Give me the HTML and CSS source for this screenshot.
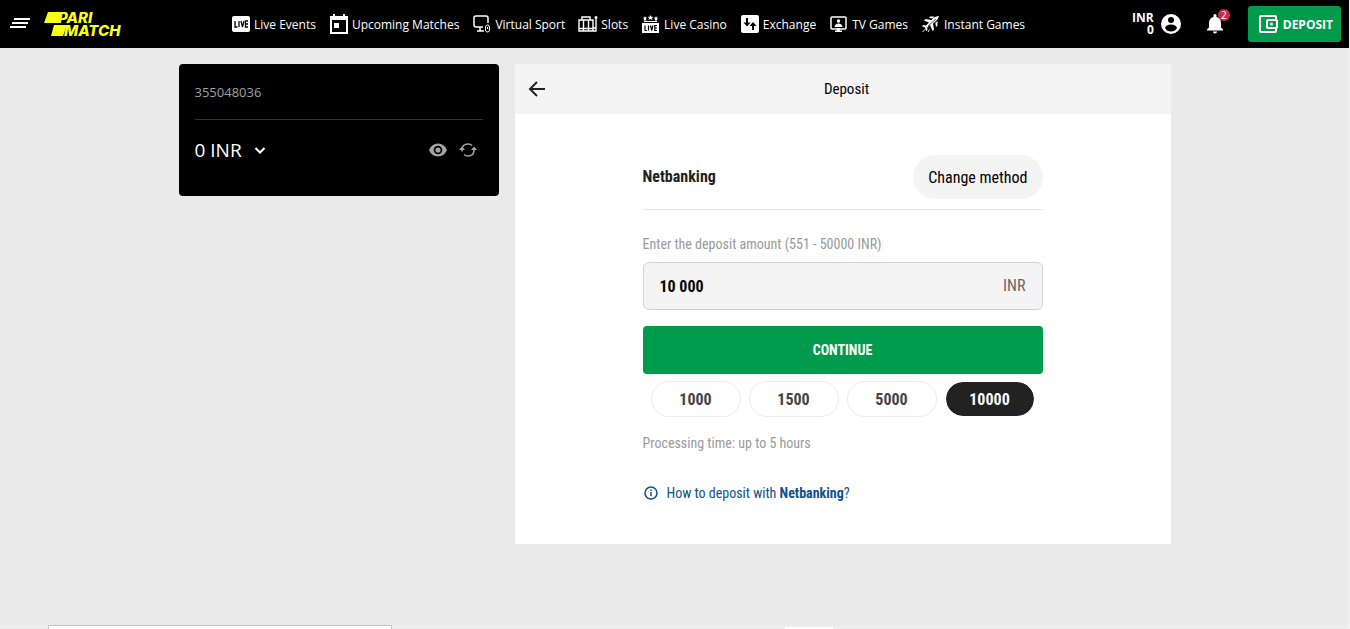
FILE: index.html
```html
<!DOCTYPE html>
<html lang="en">
<head>
    <meta charset="UTF-8">
    <meta name="viewport" content="width=device-width, initial-scale=1.0">
    <title>Deposit</title>
    <link rel="stylesheet" href="styles.css">
</head>
<body>
    <header class="header">
        <div class="brand">
            <button class="icon-button" aria-label="Menu">
                <svg width="20" height="20" viewBox="0 0 20 20" fill="none" stroke="#fff" stroke-width="2">
                    <path d="M4 5h16M2 9h16M0 13h16"/>
                </svg>
            </button>
            <a href="#" class="logo" aria-label="Parimatch">
                <svg width="80" height="26" viewBox="0 0 80 26" fill="#f8ff13">
                    <path d="M4 1h15l-4 11H0zM10 14h13l-4 11H7z"/>
                    <text x="14" y="12">PARI</text>
                    <text x="20" y="25">MATCH</text>
                </svg>
            </a>
        </div>
        <nav class="nav">
            <a href="#">
                <svg width="20" height="20" viewBox="0 0 20 20">
                    <rect x="1" y="2" width="18" height="16" rx="2" fill="#fff"/>
                    <path d="M4 7v6h2.500M8 7v6M10 7l1.500 6L13 7M17 7h-2.500v6H17M14.500 10H17" fill="none" stroke="#000" stroke-width="1.300"/>
                </svg>
                Live Events
            </a>
            <a href="#">
                <svg width="20" height="20" viewBox="0 0 20 20">
                    <path d="M2 3h16v16H2z" fill="none" stroke="#fff" stroke-width="2"/>
                    <path d="M1 2h18v4H1zM4 0h2v3H4zM14 0h2v3h-2zM5 9h5v5H5z" fill="#fff"/>
                </svg>
                Upcoming Matches
            </a>
            <a href="#">
                <svg width="20" height="20" viewBox="0 0 20 20" fill="none" stroke="#fff" stroke-width="1.500">
                    <path d="M16 9V4q0-2-2-2H4Q2 2 2 4v7q0 2 2 2h7M8 13v4M5 17h7"/>
                    <rect x="13.500" y="11" width="4" height="7" rx="2" stroke-width="1"/>
                    <path d="M15.500 13v2" stroke-width="1"/>
                </svg>
                Virtual Sport
            </a>
            <a href="#">
                <svg width="20" height="20" viewBox="0 0 20 20" fill="none" stroke="#fff" stroke-width="1.400">
                    <path d="M1 6h14v11H1zM5.500 6v11M10.500 6v11M4 6V3h8v3M1 14.500h14M15 14h3V5M15 17h3v-4"/>
                    <circle cx="18" cy="3.500" r="1.500" fill="#fff" stroke="none"/>
                </svg>
                Slots
            </a>
            <a href="#">
                <svg width="20" height="20" viewBox="0 0 20 20">
                    <path d="M1 9h17v10H1zM3 7h13v1H3z" fill="#fff"/>
                    <path d="M9.500 1l.8 1.700h2L11 4l.5 2-2-1-2 1 .5-2-1.300-1.300h2zM4 2l.7 1.500H6L5 5l.5 1.500H2.500L3 5 2 3.500h1.300zM15 2l.7 1.500H17L16 5l.5 1.500h-3L14 5l-1-1.500h1.300z" fill="#fff"/>
                    <path d="M4 11.500v5h2M7.500 11.500v5M9.500 11.500l1.200 5 1.200-5M16 11.500h-2.200v5H16M13.800 14H16" fill="none" stroke="#000" stroke-width="1.200"/>
                </svg>
                Live Casino
            </a>
            <a href="#">
                <svg width="20" height="20" viewBox="0 0 20 20">
                    <rect x="1" y="1" width="18" height="18" rx="2" fill="#fff"/>
                    <path d="M7 4v6M13 16v-5" stroke="#000" stroke-width="2"/>
                    <path d="M3.500 8.500h7L7 12.500zM9.500 12l3.500-4 3.500 4z"/>
                </svg>
                Exchange
            </a>
            <a href="#">
                <svg width="20" height="20" viewBox="0 0 20 20" fill="#fff">
                    <rect x="2" y="3" width="15" height="12" rx="1" fill="none" stroke="#fff" stroke-width="1.500"/>
                    <circle cx="9.500" cy="7" r="1.700"/>
                    <path d="M5.500 13q.5-3.500 4-3.500t4 3.500zM8 14h3v3H8zM6 16.500h7V18H6z"/>
                </svg>
                TV Games
            </a>
            <a href="#">
                <svg width="20" height="20" viewBox="0 0 20 20" fill="#fff">
                    <path d="M18 2q-3 0-5 1.500L10.500 6 4.500 5 3 6.500 8 8.500l-3 3-3-.5L1 12.200l3 1.300 1.300 3.500 1.200-1-.3-2.500L9 11l2.500 6L13 15.500l-1-6L15 7q2.500-2 3-5z"/>
                    <path d="M9 2.500h4.500L11.500 4.500 8 3.800zM16.500 7v4.500L15 13l-.7-4z"/>
                    <path d="M1.500 18l3-3M7 18l1.500-2.500" stroke="#fff"/>
                    <path d="M7 12l8-7" stroke="#000" stroke-width=".7"/>
                </svg>
                Instant Games
            </a>
        </nav>
        <div class="account">
            <a href="#" class="profile">
                <span>INR<br>0</span>
                <svg width="22" height="22" viewBox="0 0 22 22">
                    <circle cx="11" cy="11" r="10" fill="#fff"/>
                    <circle cx="11" cy="7" r="3"/>
                    <path d="M5 15q1-3.500 6-3.500t6 3.500q-2 3.500-6 3.500T5 15z"/>
                </svg>
            </a>
            <button class="icon-button bell" aria-label="Notifications">
                <svg width="18" height="20" viewBox="0 0 18 20" fill="#fff">
                    <path d="M7.500 3V1.500a1.500 1.500 0 0 1 3 0V3q4.500 1.200 4.500 6v4.500l2 2v1H1v-1l2-2V9q0-4.800 4.500-6zM7 17.500h4a2 2 0 0 1-4 0z"/>
                </svg>
                <span class="badge">2</span>
            </button>
            <button class="deposit-button">
                <svg width="20" height="20" viewBox="0 0 20 20" fill="none" stroke="#fff" stroke-width="2">
                    <path d="M18 5V3q0-1-1-1H3Q2 2 2 3v14q0 1 1 1h14q1 0 1-1v-2"/>
                    <rect x="9" y="6" width="10" height="8" rx="1"/>
                    <circle cx="13.500" cy="10" r="1.500" fill="#fff" stroke="none"/>
                </svg>
                DEPOSIT
            </button>
        </div>
    </header>

    <main class="content">
        <aside class="balance">
            <p class="user-id">355048036</p>
            <div class="balance-row">
                <button class="icon-button amount">
                    0 INR
                    <svg width="12" height="12" viewBox="0 0 12 12" fill="none" stroke="#fff" stroke-width="2">
                        <path d="M1.500 4L6 8.500 10.500 4"/>
                    </svg>
                </button>
                <div class="balance-actions">
                    <button class="icon-button" aria-label="Hide balance">
                        <svg width="20" height="20" viewBox="0 0 20 20" fill="#a5a5a5">
                            <path fill-rule="evenodd" d="M10 3.500q6.300 0 9 6.500-2.700 6.500-9 6.500T1 10q2.700-6.500 9-6.500zm0 2.200a4.300 4.300 0 1 0 0 8.600 4.300 4.300 0 0 0 0-8.600z"/>
                            <circle cx="10" cy="10" r="2.600"/>
                        </svg>
                    </button>
                    <button class="icon-button" aria-label="Refresh balance">
                        <svg width="20" height="20" viewBox="0 0 20 20" fill="none" stroke="#a5a5a5" stroke-width="1.500">
                            <path d="M4 11.500V10q0-6 6-6 2.500 0 4 1.500M16 9v1q0 6-6 6-2.500 0-4-1.500"/>
                            <path d="M1 10h6l-3-3.500zM13 10h6l-3-3.500z" fill="#a5a5a5" stroke="none"/>
                        </svg>
                    </button>
                </div>
            </div>
        </aside>

        <section class="panel">
            <div class="panel-header">
                <button class="icon-button" aria-label="Back">
                    <svg width="20" height="20" viewBox="0 0 20 20" fill="none" stroke="#222" stroke-width="2">
                        <path d="M18 10H3M10 3l-7 7 7 7"/>
                    </svg>
                </button>
                <h1>Deposit</h1>
            </div>
            <form class="deposit-form">
                <div class="method">
                    <h2>Netbanking</h2>
                    <button type="button" class="change-method">Change method</button>
                </div>
                <label for="amount">Enter the deposit amount (551 - 50000 INR)</label>
                <div class="amount-field">
                    <input type="text" id="amount" value="10 000">
                    <span>INR</span>
                </div>
                <button type="submit" class="continue">CONTINUE</button>
                <div class="presets">
                    <button type="button">1000</button>
                    <button type="button">1500</button>
                    <button type="button">5000</button>
                    <button type="button" class="active">10000</button>
                </div>
                <p class="processing">Processing time: up to 5 hours</p>
                <a href="#" class="help">
                    <svg width="16" height="16" viewBox="0 0 16 16" fill="none" stroke="#0f5288" stroke-width="1.500">
                        <circle cx="8" cy="8" r="6"/>
                        <path d="M8 7v4M8 4.500V6"/>
                    </svg>
                    <span>How to deposit with <b>Netbanking</b>?</span>
                </a>
            </form>
        </section>
    </main>

    <footer class="bottom-bar">
        <div class="bottom-box"></div>
        <div class="bottom-tab"></div>
    </footer>
</body>
</html>
```

FILE: styles.css
```css
* {
    box-sizing: border-box;
}
body {
    display: flex;
    flex-direction: column;
    min-height: 100vh;
    margin: 0;
    border-right: 1px solid #f4f4f4;
    background: #eaeaea;
    font-family: "Open Sans", sans-serif;
}
h1, h2, p {
    margin: 0;
}
a {
    color: inherit;
    text-decoration: none;
}
button, input {
    font-family: inherit;
}
button {
    cursor: pointer;
}
svg {
    display: block;
    flex: none;
    overflow: visible;
}
.icon-button {
    padding: 0;
    border: none;
    background: none;
}

/* Header */
.header {
    display: flex;
    align-items: center;
    justify-content: space-between;
    height: 48px;
    padding: 0 8px 0 10px;
    background: #000;
    color: #fff;
}
.brand {
    display: flex;
    align-items: center;
    gap: 14px;
}
.logo text {
    font: italic 800 15px "Inter", sans-serif;
}
.nav {
    display: flex;
    gap: 13px;
    font-size: 12px;
    white-space: nowrap;
}
.nav a {
    display: flex;
    align-items: center;
    gap: 3px;
}
.account {
    display: flex;
    align-items: center;
}
.profile {
    display: flex;
    align-items: center;
    gap: 6px;
    font-size: 12px;
    font-weight: bold;
    line-height: 12px;
    text-align: right;
}
.bell {
    position: relative;
    margin: 0 24px;
}
.badge {
    position: absolute;
    top: -5px;
    right: -6px;
    width: 12px;
    height: 12px;
    border-radius: 50%;
    background: #c92a55;
    color: #fff;
    font-size: 10px;
    line-height: 12px;
}
.deposit-button {
    display: flex;
    align-items: center;
    gap: 5px;
    height: 36px;
    padding: 0 8px 0 10px;
    border: none;
    border-radius: 3px;
    background: #009b4d;
    color: #fff;
    font-size: 12px;
    font-weight: bold;
}

/* Content */
.content {
    display: flex;
    flex: 1;
    align-items: flex-start;
    gap: 16px;
    width: 100%;
    max-width: 992px;
    margin: 0 auto;
    padding: 16px 0;
}
.balance {
    flex: 0 0 320px;
    padding: 0 16px 24px;
    border-radius: 4px;
    background: #000;
}
.user-id {
    height: 56px;
    border-bottom: 1px solid #333;
    color: #a0a0a0;
    font-size: 13px;
    line-height: 56px;
}
.balance-row {
    display: flex;
    align-items: center;
    justify-content: space-between;
    height: 52px;
    padding: 8px 5px 0 0;
}
.amount {
    display: flex;
    align-items: center;
    gap: 12px;
    color: #fff;
    font-size: 19px;
}
.balance-actions {
    display: flex;
    gap: 10px;
}

.panel {
    flex: 1;
    min-height: 480px;
    background: #fff;
    font-family: "Roboto Condensed", "Liberation Sans Narrow", Roboto, sans-serif;
}
.panel-header {
    display: grid;
    grid-template-columns: 20px 1fr 12px;
    align-items: center;
    height: 50px;
    padding: 0 12px;
    background: #f4f4f4;
}
.panel-header h1 {
    font-size: 15px;
    font-weight: normal;
    text-align: center;
}
.deposit-form {
    display: flex;
    flex-direction: column;
    max-width: 400px;
    margin: 0 auto;
    padding: 41px 0;
    color: #9a9a9a;
    font-size: 14px;
    line-height: 20px;
}
.method {
    display: flex;
    align-items: center;
    justify-content: space-between;
    padding-bottom: 10px;
    border-bottom: 1px solid #e6e6e6;
}
.method h2 {
    color: #222;
    font-size: 16px;
}
.change-method {
    height: 44px;
    padding: 0 15px;
    border: none;
    border-radius: 22px;
    background: #f4f4f4;
    font-size: 16px;
}
.deposit-form label {
    margin-top: 24px;
}
.amount-field {
    display: flex;
    align-items: center;
    height: 48px;
    margin: 8px 0 16px;
    padding: 0 16px;
    border: 1px solid #d2d2d2;
    border-radius: 6px;
    background: #f4f4f4;
    color: #666;
    font-size: 16px;
}
.amount-field input {
    flex: 1;
    min-width: 0;
    padding: 0;
    border: none;
    outline: none;
    background: none;
    color: #000;
    font-size: 16px;
    font-weight: bold;
}
.continue {
    height: 48px;
    border: none;
    border-radius: 4px;
    background: #009b4d;
    color: #fff;
    font-size: 14px;
    font-weight: bold;
}
.presets {
    display: flex;
    gap: 8px;
    padding: 7px 8px 16px;
}
.presets button {
    flex: 1;
    height: 36px;
    padding: 0;
    border: 1px solid #ebebeb;
    border-radius: 18px;
    background: #fff;
    color: #444;
    font-size: 16px;
    font-weight: bold;
}
.presets .active {
    border-color: #fff;
    background: #222;
    background-clip: padding-box;
    color: #fff;
}
.help {
    display: flex;
    align-items: center;
    gap: 8px;
    margin-top: 30px;
    color: #0f5288;
}

/* Bottom */
.bottom-bar {
    display: flex;
    align-items: flex-end;
    gap: 393px;
    height: 4px;
    padding-left: 48px;
    background: #eee;
}
.bottom-box {
    width: 344px;
    height: 4px;
    border: 1px solid #c4c4c4;
    border-bottom: none;
    background: #fff;
}
.bottom-tab {
    width: 48px;
    height: 2px;
    background: #fff;
}
```
